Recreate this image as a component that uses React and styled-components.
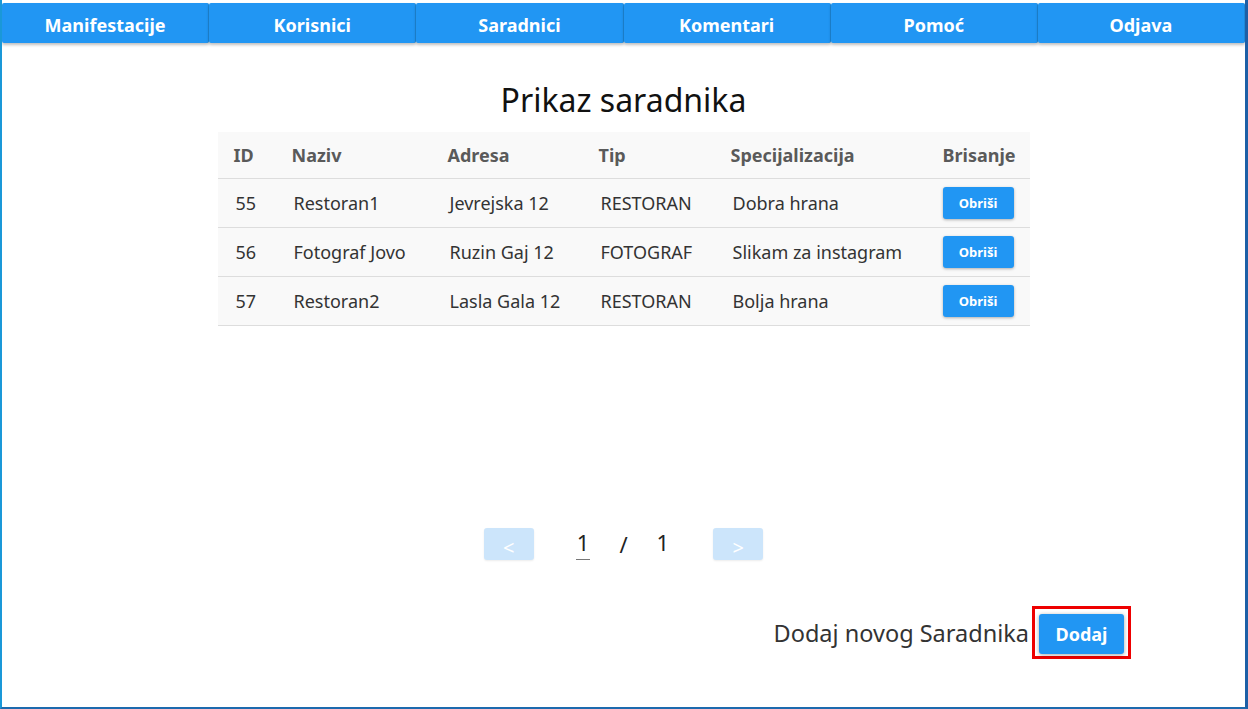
import React from "react";
import styled, { createGlobalStyle } from "styled-components";

const GlobalStyle = createGlobalStyle`
  html, body {
    margin: 0;
    padding: 0;
    background: #ffffff;
  }
  body {
    font-family: "Noto Sans", "Open Sans", sans-serif;
  }
`;

const rows = [
  { id: 55, naziv: "Restoran1", adresa: "Jevrejska 12", tip: "RESTORAN", spec: "Dobra hrana" },
  { id: 56, naziv: "Fotograf Jovo", adresa: "Ruzin Gaj 12", tip: "FOTOGRAF", spec: "Slikam za instagram" },
  { id: 57, naziv: "Restoran2", adresa: "Lasla Gala 12", tip: "RESTORAN", spec: "Bolja hrana" },
];

const navItems = ["Manifestacije", "Korisnici", "Saradnici", "Komentari", "Pomoć", "Odjava"];

const colWidths = [58, 156, 151, 132, 212, 103];

const Frame = styled.div`
  width: 1248px;
  height: 709px;
  box-sizing: border-box;
  border-left: 2px solid #1a98d8;
  border-right: 3px solid #1d5fa6;
  border-bottom: 2px solid #1d6aae;
  display: flex;
  flex-direction: column;
  overflow: hidden;
`;

const Nav = styled.nav`
  display: grid;
  grid-template-columns: repeat(6, 1fr);
  padding-top: 3px;
  height: 40px;
  box-sizing: content-box;
`;

const NavButton = styled.button`
  border: none;
  border-right: 1px solid #1e88d8;
  background: #2196f3;
  color: #ffffff;
  font-family: inherit;
  font-size: 18px;
  font-weight: 700;
  height: 40px;
  padding: 3px 0 0;
  border-radius: 2px;
  box-shadow: 0 2px 3px rgba(0, 0, 0, 0.25);
  cursor: pointer;
`;

const Main = styled.main`
  flex: 1;
  display: flex;
  flex-direction: column;
  align-items: center;
`;

const Title = styled.h1`
  margin: 35px 0 0;
  font-size: 32px;
  font-weight: 400;
  color: #111;
  line-height: 44px;
  height: 44px;
`;

const Table = styled.table`
  margin-top: 10px;
  width: 812px;
  border-collapse: collapse;
  table-layout: fixed;
  background: #f9f9f9;
  color: #333;
  font-size: 18px;
`;

const Th = styled.th`
  text-align: left;
  font-weight: 700;
  color: #5a5a5a;
  height: 46px;
  padding: 0 0 0 16px;
  border-bottom: 1px solid #dddddd;
`;

const Td = styled.td`
  height: 48px;
  padding: 0 0 0 18px;
  border-bottom: 1px solid #dddddd;
  white-space: nowrap;
`;

const SmallButton = styled.button`
  width: 71px;
  height: 32px;
  margin-left: -2px;
  border: none;
  border-radius: 3px;
  background: #2196f3;
  color: #fff;
  font-family: inherit;
  font-weight: 700;
  font-size: 13px;
  box-shadow: 0 1px 3px rgba(0, 0, 0, 0.3);
  cursor: pointer;
`;

const Pager = styled.div`
  margin-top: 201px;
  display: flex;
  align-items: center;
  font-size: 22px;
  color: #222;
`;

const PageButton = styled.button`
  width: 50px;
  height: 32px;
  border: none;
  border-radius: 3px;
  background: #cce5fb;
  color: #ffffff;
  font-family: inherit;
  font-size: 20px;
  padding-top: 8px;
  line-height: 24px;
  box-shadow: 0 1px 2px rgba(0, 0, 0, 0.08);
`;

const PageNumber = styled.span`
  display: inline-block;
  margin: ${(p) => p.$margin};
  padding: 0 ${(p) => (p.$current ? "1px" : "0")} 2px;
  border-bottom: 1px solid ${(p) => (p.$current ? "#777" : "transparent")};
  line-height: 30px;
`;

const AddRow = styled.div`
  align-self: flex-end;
  margin: 46px 114px 0 0;
  display: flex;
  align-items: center;
  font-size: 23.5px;
  color: #333;
`;

const Highlight = styled.div`
  margin-left: 3px;
  border: 3px solid #ee0000;
  padding: 5px 4px 2px 4px;
  display: flex;
`;

const AddButton = styled.button`
  width: 85px;
  height: 40px;
  border: none;
  border-radius: 3px;
  background: #2196f3;
  color: #fff;
  font-family: inherit;
  font-weight: 700;
  font-size: 18px;
  box-shadow: 0 1px 4px rgba(0, 0, 0, 0.35);
  cursor: pointer;
`;

export default function App() {
  return (
    <>
      <GlobalStyle />
      <Frame>
        <Nav>
          {navItems.map((n) => (
            <NavButton key={n}>{n}</NavButton>
          ))}
        </Nav>
        <Main>
          <Title>Prikaz saradnika</Title>
          <Table>
            <colgroup>
              {colWidths.map((w, i) => (
                <col key={i} style={{ width: w }} />
              ))}
            </colgroup>
            <thead>
              <tr>
                <Th>ID</Th>
                <Th>Naziv</Th>
                <Th>Adresa</Th>
                <Th>Tip</Th>
                <Th>Specijalizacija</Th>
                <Th>Brisanje</Th>
              </tr>
            </thead>
            <tbody>
              {rows.map((r) => (
                <tr key={r.id}>
                  <Td>{r.id}</Td>
                  <Td>{r.naziv}</Td>
                  <Td>{r.adresa}</Td>
                  <Td>{r.tip}</Td>
                  <Td>{r.spec}</Td>
                  <Td>
                    <SmallButton>Obriši</SmallButton>
                  </Td>
                </tr>
              ))}
            </tbody>
          </Table>
          <Pager>
            <PageButton>&lt;</PageButton>
            <PageNumber $current $margin="0 29px 0 42px">1</PageNumber>
            <span>/</span>
            <PageNumber $margin="0 44px 0 29px">1</PageNumber>
            <PageButton>&gt;</PageButton>
          </Pager>
          <AddRow>
            Dodaj novog Saradnika
            <Highlight>
              <AddButton>Dodaj</AddButton>
            </Highlight>
          </AddRow>
        </Main>
      </Frame>
    </>
  );
}
